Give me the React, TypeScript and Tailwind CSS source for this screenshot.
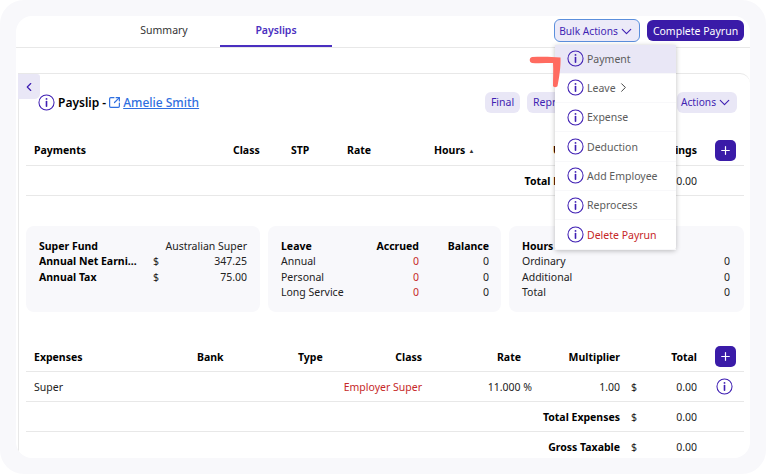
import { ChevronDown, ChevronLeft, ChevronRight, Plus, SquareArrowOutUpRight } from 'lucide-react'

function InfoIcon({ className }: { className: string }) {
  return (
    <svg className={className} viewBox="0 0 18 18" fill="none" stroke="currentColor">
      <circle cx="9" cy="9" r="8" strokeWidth="1.1" />
      <path d="M9 8v5" strokeWidth="1.7" strokeLinecap="round" />
      <circle cx="9" cy="5.2" r="1" fill="currentColor" stroke="none" />
    </svg>
  )
}

function AddButton() {
  return (
    <button className="flex h-[21px] w-[21px] items-center justify-center rounded-[5px] bg-[#3a1ba8] text-white">
      <Plus className="h-[13px] w-[13px]" strokeWidth={2.2} />
    </button>
  )
}

const menu = ['Payment', 'Leave', 'Expense', 'Deduction', 'Add Employee', 'Reprocess', 'Delete Payrun']

function Menu() {
  return (
    <div className="absolute left-[555px] top-[44.5px] z-10 w-[121px] rounded-b-[3px] bg-white shadow-[0_1px_5px_rgba(0,0,0,0.25)]">
      {menu.map((item, i) => (
        <div
          key={item}
          className={`flex h-[29.3px] items-center gap-[3px] border-b border-[#f8f8fa] pl-[12px] ${i === 0 ? 'bg-[#e9e7f6]' : ''} ${i === 6 ? 'text-[#c62828]' : 'text-[#5c5c5c]'}`}
        >
          <InfoIcon className="h-[17px] w-[17px] shrink-0 text-[#3f1fb3]" />
          <span className="pt-[1px]">{item}</span>
          {item === 'Leave' && <ChevronRight className="-ml-[3px] h-[15px] w-[15px] text-[#444]" strokeWidth={1.6} />}
        </div>
      ))}
    </div>
  )
}

const payCols = 'grid h-[30px] grid-cols-[199px_58px_56px_87px_119px_60px_84px_47px] items-center border-b border-[#e8e8e8] pl-[8px] font-bold text-black'
const expCols = 'grid h-[30px] grid-cols-[163px_101px_42px_82px_110px_88px_77px_47px] items-center border-b border-[#e8e8e8] pl-[8px]'

export default function App() {
  return (
    <div className="relative h-[474px] w-[766px] overflow-hidden bg-white font-['Noto_Sans',sans-serif] text-[10.5px] leading-none text-[#222]">
      <div className="h-full rounded-[24px] bg-[#f8f8fb] p-[16px]">
        <div className="h-[442px] overflow-hidden rounded-[16px] bg-white">
          {/* Tabs */}
          <div className="flex h-[32px] border-b border-[#e8e8e8]">
            <div className="flex w-[204px] items-center justify-center pb-[3px] pl-[92px] text-[#333]">Summary</div>
            <div className="flex w-[112px] items-center justify-center border-b-2 border-[#4a2fc0] pb-[1px] font-semibold text-[#4a2fc0]">Payslips</div>
            <div className="ml-auto mr-[6px] flex items-start gap-[7px] pt-[3px]">
              <button className="flex h-[23px] w-[86px] items-center justify-center rounded-[6px] border border-[#5b8fdc] bg-[#eceaf8] pt-[1px] text-[10.2px] text-[#3f1fb3]">
                Bulk Actions <ChevronDown className="h-[17px] w-[17px]" strokeWidth={1.6} />
              </button>
              <button className="mt-[1px] h-[21px] w-[97px] rounded-[6px] bg-[#3a1ba8] pt-[1px] text-white">Complete Payrun</button>
            </div>
          </div>

          {/* Payslip card */}
          <div className="relative ml-[2px] mt-[25px] h-[386px] rounded-tr-[10px] border-l border-t border-[#e8e8e8] pl-[7px] pr-[6px]">
            <div className="absolute -left-[1px] top-0 flex h-[25px] w-[22px] items-center justify-center rounded-br-[5px] rounded-tr-[3px] bg-[#e9e7f6] text-[#3f1fb3]">
              <ChevronLeft className="h-[14px] w-[14px]" strokeWidth={2} />
            </div>

            <div className="flex h-[62px] items-start pl-[12px] pr-[7px]">
              <div className="mt-[20px] flex items-center gap-[3px] text-[12px] font-medium text-black">
                <InfoIcon className="h-[17px] w-[17px] text-[#3f1fb3]" />
                <span className="font-semibold">Payslip -</span>
                <SquareArrowOutUpRight className="-mx-[1px] h-[13px] w-[13px] text-[#2f6fe0]" strokeWidth={2.2} />
                <span className="text-[#2f6fe0] underline">Amelie Smith</span>
              </div>
              <div className="ml-auto mt-[18px] flex gap-[7px] text-[#3f1fb3]">
                <span className="flex h-[21px] w-[35px] items-center justify-center rounded-[6px] bg-[#e9e7f6]">Final</span>
                <span className="flex h-[21px] w-[143px] items-center rounded-[6px] bg-[#e9e7f6] pl-[6px]">Reprocess</span>
                <span className="flex h-[21px] w-[60px] items-center justify-center rounded-[6px] bg-[#e9e7f6] text-[10.2px]">
                  Actions <ChevronDown className="h-[17px] w-[17px]" strokeWidth={1.6} />
                </span>
              </div>
            </div>

            {/* Payments */}
            <div className={payCols}>
              <span>Payments</span>
              <span>Class</span>
              <span>STP</span>
              <span>Rate</span>
              <span className="flex items-center gap-[3px]">Hours <span className="text-[6px] text-[#333]">▲</span></span>
              <span>Units</span>
              <span className="text-right">Earnings</span>
              <span className="pl-[18px]"><AddButton /></span>
            </div>
            <div className="flex h-[30px] items-center justify-end border-b border-[#e8e8e8] pr-[47px] pt-[1px] text-[#222]">
              <span className="mr-[49px] font-bold text-black">Total Payments</span>
              <span>$</span>
              <span className="ml-[16px]">0.00</span>
            </div>

            {/* Summary cards */}
            <div className="mt-[30px] grid grid-cols-[234px_233px_235px] gap-x-[8px]">
              <div className="h-[86px] rounded-[8px] bg-[#f8f8fb] px-[13px] pt-[12px]">
                <div className="flex h-[15.5px] items-center justify-between">
                  <span className="font-bold text-black">Super Fund</span>
                  <span>Australian Super</span>
                </div>
                <div className="flex h-[15.5px] items-center">
                  <span className="w-[114px] font-bold text-black"><span className="block w-[98px] truncate">Annual Net Earnings</span></span>
                  <span>$</span>
                  <span className="ml-auto">347.25</span>
                </div>
                <div className="flex h-[15.5px] items-center">
                  <span className="w-[114px] font-bold text-black">Annual Tax</span>
                  <span>$</span>
                  <span className="ml-auto">75.00</span>
                </div>
              </div>

              <div className="h-[86px] rounded-[8px] bg-[#f8f8fb] pl-[13px] pr-[12px] pt-[12px]">
                <div className="grid h-[15.5px] grid-cols-[1fr_70px_70px] items-center text-right font-bold text-black">
                  <span className="text-left">Leave</span><span>Accrued</span><span>Balance</span>
                </div>
                {['Annual', 'Personal', 'Long Service'].map((l) => (
                  <div key={l} className="grid h-[15.5px] grid-cols-[1fr_70px_70px] items-center text-right">
                    <span className="text-left">{l}</span><span className="text-[#c62828]">0</span><span>0</span>
                  </div>
                ))}
              </div>

              <div className="h-[86px] rounded-[8px] bg-[#f8f8fb] pl-[13px] pr-[14px] pt-[12px]">
                <div className="flex h-[15.5px] items-center font-bold text-black">Hours</div>
                {['Ordinary', 'Additional', 'Total'].map((l) => (
                  <div key={l} className="flex h-[15.5px] items-center justify-between">
                    <span>{l}</span><span>0</span>
                  </div>
                ))}
              </div>
            </div>

            {/* Expenses */}
            <div className={`${expCols} mt-[30px] pt-[1px] font-bold text-black`}>
              <span>Expenses</span>
              <span>Bank</span>
              <span>Type</span>
              <span className="text-right">Class</span>
              <span className="pr-[11px] text-right">Rate</span>
              <span className="text-right">Multiplier</span>
              <span className="text-right">Total</span>
              <span className="-mt-[1px] pl-[18px]"><AddButton /></span>
            </div>
            <div className={`${expCols} pt-[1px]`}>
              <span>Super</span>
              <span />
              <span />
              <span className="whitespace-nowrap text-right text-[#c62828]">Employer Super</span>
              <span className="text-right">11.000 %</span>
              <span className="text-right">1.00</span>
              <span className="flex justify-between pl-[11px]"><span>$</span><span>0.00</span></span>
              <span className="-mt-[1px] pl-[19px]"><InfoIcon className="h-[17px] w-[17px] text-[#3f1fb3]" /></span>
            </div>
            <div className={`${expCols} pt-[1px]`}>
              <span className="col-span-6 text-right font-bold text-black">Total Expenses</span>
              <span className="flex justify-between pl-[11px]"><span>$</span><span>0.00</span></span>
            </div>
            <div className={`${expCols} pt-[1px]`}>
              <span className="col-span-6 text-right font-bold text-black">Gross Taxable</span>
              <span className="flex justify-between pl-[11px]"><span>$</span><span>0.00</span></span>
            </div>
          </div>
        </div>
      </div>
      <Menu />
      {/* hand drawn annotation */}
      <svg className="absolute left-[526px] top-[54px] z-20 h-[36px] w-[36px]" viewBox="0 0 36 36">
        <path d="M6 3 C14 2.5 25 2.5 34.5 3.5 C35 12 33 25 31.5 32 C31 33.5 27.5 33.5 27 32 C27 24 27.5 16 27 9 C20 9 12 9.5 6 9 C3 8.5 3 3.5 6 3 Z" fill="#ff6b60" />
      </svg>
    </div>
  )
}
